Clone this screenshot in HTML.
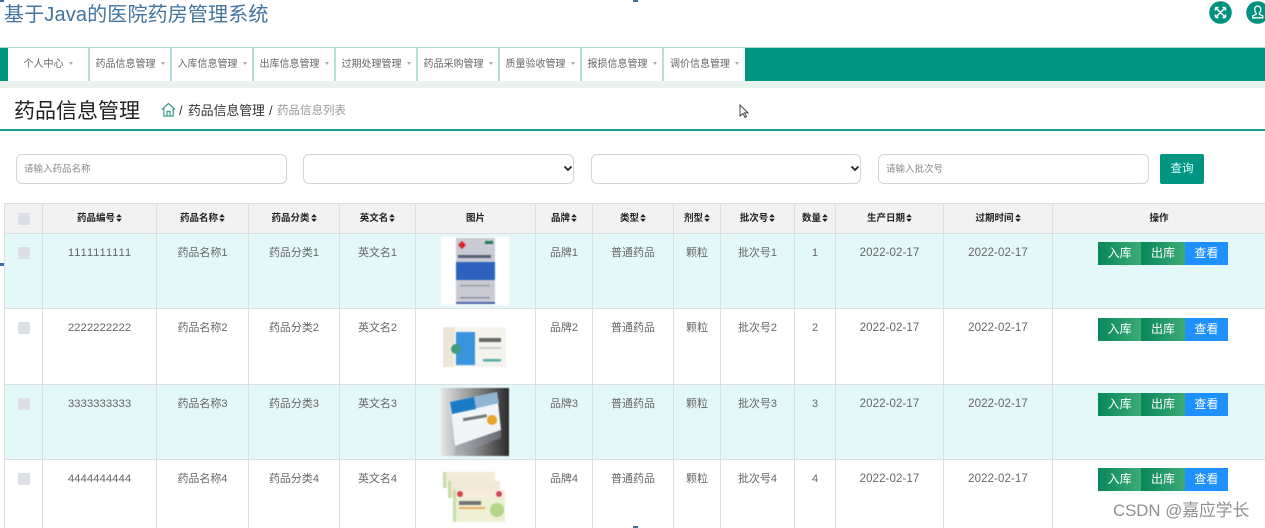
<!DOCTYPE html>
<html lang="zh-CN">
<head>
<meta charset="utf-8">
<title>基于Java的医院药房管理系统</title>
<style>
*{box-sizing:border-box}
html,body{margin:0;padding:0;width:1265px;height:528px;overflow:hidden;background:#fff}
body{font-family:"Liberation Sans","Noto Sans CJK SC",sans-serif;color:#666}
#w{position:relative;width:1265px;height:528px;overflow:hidden;filter:blur(.35px)}
.a{position:absolute;white-space:nowrap}
.title{left:4px;top:1px;font-size:20px;line-height:28px;letter-spacing:.15px;color:#41749f}
.nav{left:0;top:47px;width:1265px;height:34px;background:#009581;border-top:1px solid #b5dcd8}
.navitem{position:absolute;top:0;height:33px;background:#fff;border-right:2px solid #b2e0dc;font-size:10px;line-height:33px;color:#666;text-align:center}
.navitem i{display:inline-block;margin-left:5px;border:2.5px solid transparent;border-top:3px solid #aaa;border-bottom:0;vertical-align:2px}
.band{left:0;top:81px;width:1265px;height:7px;background:#e8f3f0}
.h{left:14px;top:96px;font-size:21px;line-height:32px;color:#222}
.crumb{top:102px;font-size:12.8px;line-height:18px;color:#333}
.line{left:0;top:129px;width:1265px;height:2px;background:#16a08c}
.ctl{top:154px;height:30px;border:1.5px solid #d4d4d4;border-radius:6px;background:#fff;font-size:9.5px;line-height:29px;padding-left:7px;color:#888}
.arrow{position:absolute;right:0;top:10px}
.btn{left:1160px;top:154px;width:44px;height:30px;background:#009581;border-radius:2px;color:#dff;font-size:11.5px;line-height:30px;text-align:center}
table{position:absolute;left:4px;top:203px;width:1261px;border-collapse:collapse;table-layout:fixed}
th,td{border:1px solid #dcdfdf;text-align:center;padding:0;vertical-align:top;overflow:hidden}
th{height:30px;background:#f2f2f3;font-size:9.5px;line-height:29px;color:#222;font-weight:700}
td{font-size:11px;line-height:16px;padding-top:11px;color:#666}
tr.o td{background:#e4f8fa}
tr.e td{background:#fff}
.s{display:inline-block;width:6px;height:8px;margin-left:1px;vertical-align:-1px}
.cb{display:block;width:12px;height:12px;background:#dcdfe5;margin:0 auto}
th .cb{margin-top:9px}
td .cb{margin-top:2px}
.n{font-size:11.4px;font-kerning:none}
.d{font-size:11.5px;letter-spacing:.1px}
.ops{position:absolute;left:1098px;width:130px;height:23px;display:flex;font-size:12px;line-height:23px;color:#fff;text-align:center}
.ops span{flex:1;background:linear-gradient(90deg,#07875a,#3dab76)}
.ops span:last-child{background:#1e90ff}
.thumb{position:absolute;left:441px;width:68px;height:68px;filter:blur(.5px)}
.mk{position:absolute;background:#3e6ea5}
.wm{left:1113px;top:500px;font-size:16.8px;line-height:22px;color:#8f8f8f}
</style>
</head>
<body>
<div id="w">
<svg width="0" height="0" style="position:absolute"><defs><symbol id="so" viewBox="0 0 6 8"><path d="M3 0l2.800 3.300H.2zM3 8L.2 4.700h5.600z" fill="#222"/></symbol></defs></svg>
<div class="a title">基于Java的医院药房管理系统</div>

<svg class="a" style="left:1209px;top:1px" width="23" height="23" viewBox="0 0 23 23"><circle cx="11.5" cy="11.5" r="11.3" fill="#00917f"/><path d="M7.500 7.500l8 8M15.500 7.500l-8 8M6.500 6.500h3M6.500 6.500v3M16.500 6.500h-3M16.500 6.500v3M6.500 16.500h3M6.500 16.500v-3M16.500 16.500h-3M16.500 16.500v-3" stroke="#fff" stroke-width="1.500" fill="none"/></svg>
<svg class="a" style="left:1246px;top:1px" width="23" height="23" viewBox="0 0 23 23"><circle cx="11.5" cy="11.5" r="11.3" fill="#00917f"/><path d="M11.500 5a3.300 3.300 0 0 1 3.300 3.500c0 2-1 3-1.500 3.800v1l3.500 1.500v2H6.700v-2l3.500-1.500v-1c-.5-.8-1.500-1.800-1.500-3.800A3.300 3.300 0 0 1 11.500 5z" stroke="#fff" stroke-width="1.300" fill="none"/></svg>

<div class="a nav">
  <div class="navitem" style="left:8px;width:82px">个人中心<i></i></div>
  <div class="navitem" style="left:90px;width:82px">药品信息管理<i></i></div>
  <div class="navitem" style="left:172px;width:82px">入库信息管理<i></i></div>
  <div class="navitem" style="left:254px;width:82px">出库信息管理<i></i></div>
  <div class="navitem" style="left:336px;width:82px">过期处理管理<i></i></div>
  <div class="navitem" style="left:418px;width:82px">药品采购管理<i></i></div>
  <div class="navitem" style="left:500px;width:82px">质量验收管理<i></i></div>
  <div class="navitem" style="left:582px;width:82px">报损信息管理<i></i></div>
  <div class="navitem" style="left:664px;width:81px;border-right:0">调价信息管理<i></i></div>
</div>
<div class="a band"></div>

<div class="a h">药品信息管理</div>
<svg class="a" style="left:161px;top:102px" width="15" height="15" viewBox="0 0 15 15"><path d="M1 7.500L7.500 1.500 14 7.500M2.800 6.500V14h9.400V6.500M6 14V9.500h3V14" stroke="#3c9c92" stroke-width="1.200" fill="none"/></svg>
<div class="a crumb" style="left:179px">/</div>
<div class="a crumb" style="left:188px">药品信息管理</div>
<div class="a crumb" style="left:269px">/</div>
<div class="a crumb" style="left:277px;font-size:11.500px;color:#999">药品信息列表</div>
<div class="a line"></div>

<svg class="a" style="left:739px;top:104px" width="11" height="15" viewBox="0 0 11 15"><path d="M1 1v11l3-2.500 2 4 1.500-.8-2-3.800H9z" fill="#fff" stroke="#444" stroke-width="1"/></svg>

<div class="a ctl" style="left:16px;width:271px">请输入药品名称</div>
<div class="a ctl" style="left:303px;width:271px"><svg class="arrow" width="10" height="7" viewBox="0 0 10 7"><path d="M1.500 1.500L5 5l3.500-3.500" stroke="#222" stroke-width="1.800" fill="none"/></svg></div>
<div class="a ctl" style="left:591px;width:270px"><svg class="arrow" width="10" height="7" viewBox="0 0 10 7"><path d="M1.500 1.500L5 5l3.500-3.500" stroke="#222" stroke-width="1.800" fill="none"/></svg></div>
<div class="a ctl" style="left:878px;width:271px">请输入批次号</div>
<div class="a btn">查询</div>

<table>
<colgroup><col style="width:38px"><col style="width:114px"><col style="width:92px"><col style="width:91px"><col style="width:76px"><col style="width:120px"><col style="width:57px"><col style="width:81px"><col style="width:47px"><col style="width:74px"><col style="width:41px"><col style="width:108px"><col style="width:109px"><col style="width:213px"></colgroup>
<tr><th><span class="cb"></span></th><th>药品编号<svg class="s"><use href="#so"/></svg></th><th>药品名称<svg class="s"><use href="#so"/></svg></th><th>药品分类<svg class="s"><use href="#so"/></svg></th><th>英文名<svg class="s"><use href="#so"/></svg></th><th>图片</th><th>品牌<svg class="s"><use href="#so"/></svg></th><th>类型<svg class="s"><use href="#so"/></svg></th><th>剂型<svg class="s"><use href="#so"/></svg></th><th>批次号<svg class="s"><use href="#so"/></svg></th><th>数量<svg class="s"><use href="#so"/></svg></th><th>生产日期<svg class="s"><use href="#so"/></svg></th><th>过期时间<svg class="s"><use href="#so"/></svg></th><th>操作</th></tr>
<tr class="o" style="height:75px"><td><span class="cb"></span></td><td class="n">1111111111</td><td>药品名称1</td><td>药品分类1</td><td>英文名1</td><td></td><td>品牌1</td><td>普通药品</td><td>颗粒</td><td>批次号1</td><td>1</td><td class="d">2022-02-17</td><td class="d">2022-02-17</td><td></td></tr>
<tr class="e" style="height:76px"><td><span class="cb"></span></td><td class="n">2222222222</td><td>药品名称2</td><td>药品分类2</td><td>英文名2</td><td></td><td>品牌2</td><td>普通药品</td><td>颗粒</td><td>批次号2</td><td>2</td><td class="d">2022-02-17</td><td class="d">2022-02-17</td><td></td></tr>
<tr class="o" style="height:75px"><td><span class="cb"></span></td><td class="n">3333333333</td><td>药品名称3</td><td>药品分类3</td><td>英文名3</td><td></td><td>品牌3</td><td>普通药品</td><td>颗粒</td><td>批次号3</td><td>3</td><td class="d">2022-02-17</td><td class="d">2022-02-17</td><td></td></tr>
<tr class="e" style="height:76px"><td><span class="cb"></span></td><td class="n">4444444444</td><td>药品名称4</td><td>药品分类4</td><td>英文名4</td><td></td><td>品牌4</td><td>普通药品</td><td>颗粒</td><td>批次号4</td><td>4</td><td class="d">2022-02-17</td><td class="d">2022-02-17</td><td></td></tr>
</table>

<div class="ops a" style="top:242px"><span>入库</span><span>出库</span><span>查看</span></div>
<div class="ops a" style="top:318px"><span>入库</span><span>出库</span><span>查看</span></div>
<div class="ops a" style="top:393px"><span>入库</span><span>出库</span><span>查看</span></div>
<div class="ops a" style="top:468px"><span>入库</span><span>出库</span><span>查看</span></div>

<svg class="thumb" style="top:237px" viewBox="0 0 68 68"><rect width="68" height="68" fill="#fff"/><rect x="15" y="1" width="39" height="66" fill="#c9cad4"/><path d="M21 4l4 4-4 4-4-4z" fill="#d8232a"/><rect x="44" y="4" width="8" height="3" fill="#1e7d55"/><rect x="17" y="18" width="33" height="3" fill="#5a5f78"/><rect x="15" y="25" width="39" height="18" fill="#2c62bd"/><rect x="19" y="48" width="30" height="1.500" fill="#9a9dac"/><rect x="19" y="60" width="30" height="1.500" fill="#8d90a0"/><rect x="15" y="65" width="39" height="2" fill="#4866ad"/></svg>

<svg class="thumb" style="top:313px" viewBox="0 0 68 68"><rect width="68" height="68" fill="#fff"/><rect x="2" y="14" width="63" height="40" fill="#f5f3ee"/><rect x="2" y="14" width="11" height="40" fill="#ece5d8"/><rect x="15" y="19" width="19" height="33" fill="#3a93dd"/><circle cx="15" cy="36" r="5" fill="#3d9c80"/><rect x="38" y="25" width="22" height="4" fill="#666"/><rect x="38" y="34" width="22" height="2" fill="#ccc"/><rect x="42" y="46" width="18" height="2.500" fill="#5aa"/></svg>

<svg class="thumb" style="top:388px" viewBox="0 0 68 68"><defs><linearGradient id="g" x1="0" x2="1"><stop offset="0" stop-color="#e2e6e6"/><stop offset=".7" stop-color="#666"/><stop offset="1" stop-color="#2a2a2a"/></linearGradient></defs><rect width="68" height="68" fill="url(#g)"/><path d="M9 14L56 4 60 42 14 58z" fill="#f2f5f7"/><path d="M9 14L56 4 58 15 11 26z" fill="#8fb4d4"/><path d="M9 14l24-5 2 12-24 5z" fill="#1a7bc5"/><rect x="22" y="28" width="24" height="3" fill="#777" transform="rotate(-10 35 30)"/><circle cx="51" cy="32" r="5" fill="#e8a52c"/><path d="M14 58L60 42V50L14 68z" fill="#99a" opacity=".45"/></svg>

<svg class="thumb" style="top:464px" viewBox="0 0 68 68"><rect width="68" height="68" fill="#fff"/><rect x="2" y="8" width="52" height="16" fill="#f3ead9"/><rect x="2" y="8" width="3" height="16" fill="#c4dfa8"/><rect x="7" y="17" width="52" height="17" fill="#f1e9d8"/><rect x="7" y="17" width="3" height="17" fill="#c4dfa8"/><rect x="12" y="26" width="52" height="32" fill="#eef0d6"/><rect x="12" y="26" width="52" height="8" fill="#f6ebdc"/><circle cx="19" cy="30" r="3" fill="#d04848"/><circle cx="58" cy="30" r="3" fill="#d0485a"/><rect x="18" y="37" width="22" height="4" fill="#777"/><rect x="18" y="43" width="26" height="2" fill="#e8b060"/><circle cx="56" cy="46" r="7" fill="#b2d68a"/><rect x="12" y="26" width="3" height="32" fill="#c4dfa8"/></svg>

<div class="a wm">CSDN @嘉应学长</div>

<div class="mk" style="left:0;top:0;width:4px;height:2px"></div>
<div class="mk" style="left:633px;top:0;width:5px;height:2px"></div>
<div class="mk" style="left:0;top:263px;width:4px;height:3px"></div>
<div class="mk" style="left:633px;top:526px;width:5px;height:2px"></div>
</div>
</body>
</html>
